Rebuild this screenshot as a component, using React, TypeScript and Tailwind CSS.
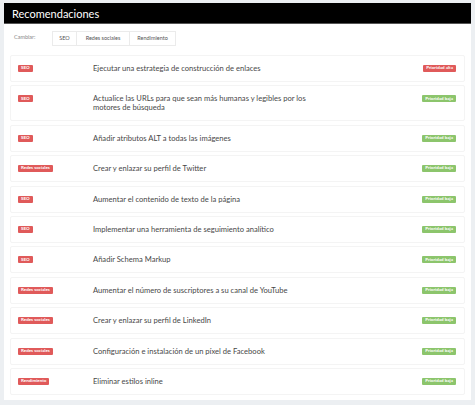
import React from 'react'

type Rec = {
  tag: 'SEO' | 'Redes sociales' | 'Rendimiento'
  title: string
  priority: 'alta' | 'baja'
}

const recs: Rec[] = [
  { tag: 'SEO', title: 'Ejecutar una estrategia de construcción de enlaces', priority: 'alta' },
  {
    tag: 'SEO',
    title: 'Actualice las URLs para que sean más humanas y legibles por los motores de búsqueda',
    priority: 'baja',
  },
  { tag: 'SEO', title: 'Añadir atributos ALT a todas las imágenes', priority: 'baja' },
  { tag: 'Redes sociales', title: 'Crear y enlazar su perfil de Twitter', priority: 'baja' },
  { tag: 'SEO', title: 'Aumentar el contenido de texto de la página', priority: 'baja' },
  { tag: 'SEO', title: 'Implementar una herramienta de seguimiento analítico', priority: 'baja' },
  { tag: 'SEO', title: 'Añadir Schema Markup', priority: 'baja' },
  { tag: 'Redes sociales', title: 'Aumentar el número de suscriptores a su canal de YouTube', priority: 'baja' },
  { tag: 'Redes sociales', title: 'Crear y enlazar su perfil de LinkedIn', priority: 'baja' },
  { tag: 'Redes sociales', title: 'Configuración e instalación de un píxel de Facebook', priority: 'baja' },
  { tag: 'Rendimiento', title: 'Eliminar estilos inline', priority: 'baja' },
]

const Badge = ({ label, color }: { label: string; color: 'red' | 'green' }) => (
  <span
    className={
      'inline-flex items-center h-[7px] px-[3px] rounded-[1px] text-white font-bold text-[4.5px] leading-none whitespace-nowrap ' +
      (color === 'red' ? 'bg-[#e05a5a]' : 'bg-[#8cc56c]')
    }
  >
    {label}
  </span>
)

export default function App() {
  return (
    <div
      className="min-h-[405px] w-[475px] bg-[#eceff2] px-[4px] pt-[3px] pb-[5px]"
      style={{ fontFamily: 'Lato, "Open Sans", sans-serif' }}
    >
      <div className="bg-white pb-[5px]">
        {/* Header */}
        <div className="h-[21px] bg-black flex items-center pl-[8px] border-b border-[#555]">
          <h1 className="text-white text-[11px] leading-none">Recomendaciones</h1>
        </div>

        {/* Filter */}
        <div className="flex items-center mt-[7px] pl-[10px]">
          <span className="text-[5.5px] text-[#888] w-[38px] -mt-[2px]">Cambiar:</span>
          <div className="flex h-[15px] border border-[#ebebeb] text-[5.5px] text-[#555]">
            <button className="w-[24px] border-r border-[#ebebeb]">SEO</button>
            <button className="w-[53px] border-r border-[#ebebeb]">Redes sociales</button>
            <button className="w-[45px]">Rendimiento</button>
          </div>
        </div>

        {/* List */}
        <div className="flex flex-col gap-[3.4px] mt-[9px] px-[6px]">
          {recs.map((r, i) => (
            <div
              key={i}
              className="flex items-start border border-[#f4f4f4] rounded-[2px] py-[8px] pl-[7px] pr-[8px]"
            >
              <div className="w-[75px] flex pt-[1px]">
                <Badge label={r.tag} color="red" />
              </div>
              <p className="w-[220px] text-[7.6px] leading-[9px] text-[#484848]">{r.title}</p>
              <div className="ml-auto flex pt-[1px]">
                <Badge
                  label={'Prioridad ' + r.priority}
                  color={r.priority === 'alta' ? 'red' : 'green'}
                />
              </div>
            </div>
          ))}
        </div>
      </div>
    </div>
  )
}
